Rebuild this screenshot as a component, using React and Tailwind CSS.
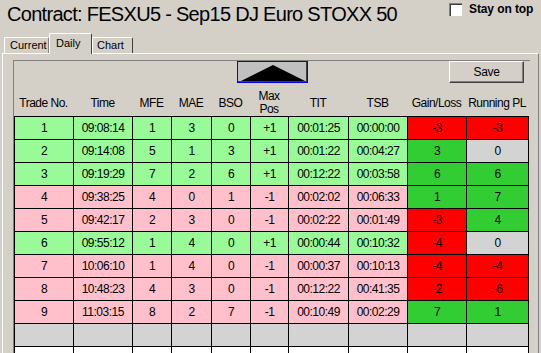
import React from 'react'

const COLS = [59, 59, 39, 40, 39, 38, 60, 59, 59, 62]
const gridCols = 'grid grid-cols-[59px_59px_39px_40px_39px_38px_60px_59px_59px_62px]'

const HEAD = ['Trade No.', 'Time', 'MFE', 'MAE', 'BSO', 'Max\nPos', 'TIT', 'TSB', 'Gain/Loss', 'Running PL']

const bgFor = {
  g: 'bg-[#98fb98]',
  p: 'bg-[#ffc0cb]',
  r: 'bg-[#ff0000]',
  l: 'bg-[#32cd32]',
  s: 'bg-[#d3d3d3]',
  w: 'bg-white',
}

// [row colour, cells..., gain colour, running colour]
const TRADES = [
  ['g', '1', '09:08:14', '1', '3', '0', '+1', '00:01:25', '00:00:00', '-3', '-3', 'r', 'r'],
  ['g', '2', '09:14:08', '5', '1', '3', '+1', '00:01:22', '00:04:27', '3', '0', 'l', 's'],
  ['g', '3', '09:19:29', '7', '2', '6', '+1', '00:12:22', '00:03:58', '6', '6', 'l', 'l'],
  ['p', '4', '09:38:25', '4', '0', '1', '-1', '00:02:02', '00:06:33', '1', '7', 'l', 'l'],
  ['p', '5', '09:42:17', '2', '3', '0', '-1', '00:02:22', '00:01:49', '-3', '4', 'r', 'l'],
  ['g', '6', '09:55:12', '1', '4', '0', '+1', '00:00:44', '00:10:32', '-4', '0', 'r', 's'],
  ['p', '7', '10:06:10', '1', '4', '0', '-1', '00:00:37', '00:10:13', '-4', '-4', 'r', 'r'],
  ['p', '8', '10:48:23', '4', '3', '0', '-1', '00:12:22', '00:41:35', '-2', '-6', 'r', 'r'],
  ['p', '9', '11:03:15', '8', '2', '7', '-1', '00:10:49', '00:02:29', '7', '1', 'l', 'l'],
  ['s', '', '', '', '', '', '', '', '', '', '', 's', 's'],
  ['w', '', '', '', '', '', '', '', '', '', '', 'w', 'w'],
]

function Row({ row }) {
  const [rc, ...rest] = row
  const cells = rest.slice(0, 10)
  const gain = rest[10]
  const run = rest[11]
  return (
    <>
      {cells.map((c, i) => {
        const bg = i === 8 ? bgFor[gain] : i === 9 ? bgFor[run] : bgFor[rc]
        return (
          <div
            key={i}
            className={`h-[23px] border-r border-b border-black flex items-center justify-center ${bg}`}
          >
            {c}
          </div>
        )
      })}
    </>
  )
}

export default function App() {
  return (
    <div className="w-[541px] h-[353px] overflow-hidden bg-[#d4d0c8] text-black font-['Liberation_Sans',Arial,sans-serif]">
      {/* Title bar */}
      <div className="flex h-[33px]">
        <div className="pl-[7px] pt-[2px] text-[20px] leading-6 tracking-[-0.7px]">
          Contract: FESXU5 - Sep15 DJ Euro STOXX 50
        </div>
        <div className="ml-auto w-[92px] flex items-start">
          <div className="mt-[3px] w-[13px] h-[13px] bg-white border-t border-l border-[#808080] border-b-white border-r-white shadow-[inset_1px_1px_0_#404040]" />
          <span className="ml-[7px] mt-[2px] text-[12px] leading-[14px] font-bold tracking-[-0.1px]">Stay on top</span>
        </div>
      </div>

      {/* Tabs */}
      <div className="flex items-end h-[20px] text-[11px]">
        <div className="ml-[4px] w-[45px] h-[16px] border-t border-l border-white border-r border-r-[#808080] rounded-t-[2px] flex items-center pl-[5px]">
          Current
        </div>
        <div className="relative z-10 w-[43px] h-[21px] -mb-px bg-[#d4d0c8] border-t border-l border-white border-r border-r-[#404040] rounded-t-[2px] flex items-center pl-[6px] pb-[2px]">
          Daily
        </div>
        <div className="w-[41px] h-[16px] border-t border-l border-white border-r border-r-[#404040] rounded-t-[2px] flex items-center pl-[4px]">
          Chart
        </div>
      </div>

      {/* Panel */}
      <div className="ml-[2px] w-[537px] h-[320px] border-t border-l border-white border-r border-r-[#808080]">
        <div className="ml-[10px] mt-[6px] w-[517px] h-[320px] border-t border-l border-[#808080] border-r-white">
          {/* Buttons */}
          <div className="flex h-[22px]">
            <button className="ml-[223px] w-[71px] h-[22px] border border-[#0000ff] bg-[#c0c0c0] p-0 relative">
              <svg width="69" height="20" viewBox="0 0 69 20" className="absolute left-0 top-0">
                <polygon points="3,19 35,3 67,19" fill="#000" />
                <line x1="0" y1="19.5" x2="69" y2="19.5" stroke="#404040" strokeWidth="1" />
                <line x1="68.5" y1="0" x2="68.5" y2="20" stroke="#404040" strokeWidth="1" />
              </svg>
            </button>
            <button className="ml-[141px] w-[75px] h-[22px] bg-[#d4d0c8] border-t border-l border-white border-b border-r border-b-[#404040] border-r-[#404040] shadow-[inset_-1px_-1px_0_#808080] text-[12px] tracking-[-0.3px] flex items-center justify-center">
              Save
            </button>
          </div>

          {/* Header */}
          <div className={`${gridCols} h-[33px] pt-[7px] text-[12px] tracking-[-0.5px]`}>
            {HEAD.map((h, i) => (
              <div key={i} className="flex items-center justify-center text-center leading-[13px] whitespace-pre-line">
                {h}
              </div>
            ))}
          </div>

          {/* Table */}
          <div className={`${gridCols} w-[515px] border-t border-l border-black text-[12px] tracking-[-0.5px]`}>
            {TRADES.map((r, i) => (
              <Row key={i} row={r} />
            ))}
          </div>
        </div>
      </div>
    </div>
  )
}
